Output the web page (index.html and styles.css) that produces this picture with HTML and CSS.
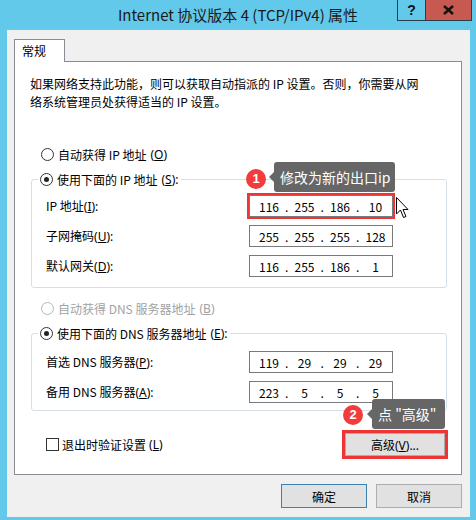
FILE: index.html
```html
<!DOCTYPE html>
<html lang="zh-CN">
<head>
<meta charset="utf-8">
<title>Internet 协议版本 4 (TCP/IPv4) 属性</title>
<link rel="stylesheet" href="styles.css">
</head>
<body>
<div class="window">
  <div class="titlebar">
    <div class="tb-spacer"></div>
    <div class="title">Internet 协议版本 4 (TCP/IPv4) 属性</div>
    <div class="tb-buttons">
      <div class="tb-btn help">?</div>
      <div class="tb-btn close">
        <svg width="11" height="10" viewBox="0 0 11 10"><path d="M1 1 L10 9 M10 1 L1 9" stroke="#111" stroke-width="2.4" fill="none"/></svg>
      </div>
    </div>
  </div>
  <div class="client">
    <div class="tabs"><div class="tab">常规</div></div>
    <div class="panel">
      <p class="intro">如果网络支持此功能，则可以获取自动指派的 IP 设置。否则，你需要从网<br>络系统管理员处获得适当的 IP 设置。</p>

      <div class="radio-row first"><span class="radio"></span>自动获得 IP 地址<span class="mn">(<u>O</u>)</span></div>
      <fieldset class="group ip-group">
        <legend class="radio-row"><span class="radio on"></span>使用下面的 IP 地址<span class="mn">(<u>S</u>):</span></legend>
        <div class="rows">
          <div class="field-row"><span class="label">IP 地址<span class="mn">(<u>I</u>):</span></span>
            <div class="ipbox hl"><span class="oct">116</span><span class="dot">.</span><span class="oct">255</span><span class="dot">.</span><span class="oct">186</span><span class="dot">.</span><span class="oct">10</span></div>
          </div>
          <div class="field-row"><span class="label">子网掩码<span class="mn">(<u>U</u>):</span></span>
            <div class="ipbox"><span class="oct">255</span><span class="dot">.</span><span class="oct">255</span><span class="dot">.</span><span class="oct">255</span><span class="dot">.</span><span class="oct">128</span></div>
          </div>
          <div class="field-row"><span class="label">默认网关<span class="mn">(<u>D</u>):</span></span>
            <div class="ipbox"><span class="oct">116</span><span class="dot">.</span><span class="oct">255</span><span class="dot">.</span><span class="oct">186</span><span class="dot">.</span><span class="oct">1</span></div>
          </div>
        </div>
      </fieldset>

      <div class="radio-row dns-auto disabled"><span class="radio"></span>自动获得 DNS 服务器地址<span class="mn">(<u>B</u>)</span></div>
      <fieldset class="group dns-group">
        <legend class="radio-row"><span class="radio on"></span>使用下面的 DNS 服务器地址<span class="mn">(<u>E</u>):</span></legend>
        <div class="rows">
          <div class="field-row"><span class="label">首选 DNS 服务器<span class="mn">(<u>P</u>):</span></span>
            <div class="ipbox"><span class="oct">119</span><span class="dot">.</span><span class="oct">29</span><span class="dot">.</span><span class="oct">29</span><span class="dot">.</span><span class="oct">29</span></div>
          </div>
          <div class="field-row"><span class="label">备用 DNS 服务器<span class="mn">(<u>A</u>):</span></span>
            <div class="ipbox"><span class="oct">223</span><span class="dot">.</span><span class="oct">5</span><span class="dot">.</span><span class="oct">5</span><span class="dot">.</span><span class="oct">5</span></div>
          </div>
        </div>
      </fieldset>

      <div class="bottom-row">
        <div class="check-row"><span class="checkbox"></span>退出时验证设置<span class="mn">(<u>L</u>)</span></div>
        <button class="btn adv">高级<span class="mn">(<u>V</u>)...</span></button>
      </div>
    </div>
    <div class="dialog-buttons">
      <button class="btn default">确定</button>
      <button class="btn">取消</button>
    </div>
  </div>

  <div class="badge b1">1</div>
  <div class="tip t1">修改为新的出口ip</div>
  <div class="badge b2">2</div>
  <div class="tip t2">点 "高级"</div>
  <svg class="cursor" width="13" height="22" viewBox="0 0 13 22">
    <path d="M0.5 0.5 L0.5 17 L4.5 13 L7.5 20.5 L10 19.5 L7 12.5 L12 12.5 Z" fill="#fff" stroke="#000" stroke-width="1" stroke-linejoin="miter"/>
  </svg>
</div>
</body>
</html>
```

FILE: styles.css
```css
* { box-sizing: border-box; }
html, body { margin: 0; padding: 0; }
body {
  font-family: "Noto Sans CJK SC", "Microsoft YaHei", sans-serif;
  font-size: 12px;
  color: #000;
  background: #fff;
  text-autospace: no-autospace;
}
.mn {
  font-family: "Noto Sans", "Noto Sans CJK SC", sans-serif;
}
.window {
  position: relative;
  width: 476px;
  height: 520px;
  background: #62c9ea;
  padding: 0 6px 3px 7px;
}
.titlebar {
  display: flex;
  height: 30px;
  margin: 0 -6px 0 -7px;
  padding: 0 4px;
}
.tb-spacer { width: 75px; flex: none; }
.title {
  flex: 1;
  text-align: center;
  font-size: 15px;
  line-height: 30px;
  color: #1a1a1a;
  white-space: nowrap;
}
.tb-buttons {
  display: flex;
  width: 75px;
  height: 21px;
  flex: none;
  border: 1px solid #2b3d49;
  border-top: none;
}
.tb-btn {
  display: flex;
  align-items: center;
  justify-content: center;
  height: 100%;
}
.help {
  width: 28px;
  border-right: 1px solid #2b3d49;
  font-weight: bold;
  font-size: 14px;
  font-family: "Liberation Sans", sans-serif;
  color: #111;
}
.close {
  flex: 1;
  background: #c75a50;
}
.client {
  height: 487px;
  background: #f0f0f0;
  padding: 9px 8px 9px 7px;
  display: flex;
  flex-direction: column;
}
.tabs { display: flex; }
.tab {
  position: relative;
  z-index: 1;
  width: 51px;
  height: 23px;
  margin-bottom: -1px;
  background: #fff;
  border: 1px solid #898c95;
  border-bottom: none;
  padding-left: 7px;
  line-height: 21px;
}
.panel {
  background: #fff;
  border: 1px solid #898c95;
  padding: 13px 14px 18px 16px;
}
.intro {
  margin: 0;
  line-height: 18px;
  margin-left: -1px;
}
.radio-row {
  display: flex;
  align-items: center;
  gap: 4px;
  height: 18px;
  white-space: nowrap;
}
.radio-row.first { margin: 34px 0 0 10px; }
.radio-row.dns-auto { margin: 11px 0 0 10px; }
.radio-row.disabled { color: #a2a2a2; }
.radio {
  width: 13px;
  height: 13px;
  border: 1px solid #333;
  border-radius: 50%;
  background: #fff;
  flex: none;
  display: flex;
  align-items: center;
  justify-content: center;
}
.disabled .radio { border-color: #b8b8b8; }
.radio.on::after {
  content: "";
  width: 5px;
  height: 5px;
  border-radius: 50%;
  background: #222;
}
.group {
  margin: 7px 0 0 0;
  border: 1px solid #d5dfe5;
  border-radius: 3px;
  min-width: 0;
  padding: 7px 14px 10px 14px;
}
.dns-group { padding-top: 9px; padding-bottom: 7px; }
.group legend {
  padding: 0 2px;
  margin-left: -8px;
}
.rows {
  display: grid;
  row-gap: 8px;
}
.field-row {
  display: grid;
  grid-template-columns: 203px 144px;
  align-items: center;
  height: 22px;
}
.ipbox {
  height: 22px;
  border: 1px solid #7a7a7a;
  display: flex;
  align-items: center;
  padding-left: 6px;
  background: #fff;
}
.ipbox.hl { outline: 2px solid #ee3535; }
.oct { width: 26px; text-align: center; }
.dot { width: 9.5px; text-align: center; }
.bottom-row {
  display: flex;
  justify-content: space-between;
  align-items: center;
  margin-top: 22px;
  padding: 0 2px 0 15px;
}
.check-row {
  display: flex;
  align-items: center;
  gap: 3px;
}
.checkbox {
  width: 13px;
  height: 13px;
  border: 1px solid #333;
  background: #fff;
}
.btn {
  font-family: inherit;
  font-size: 12px;
  color: #000;
  background: #e1e1e1;
  border: 1px solid #adadad;
  padding: 0;
  margin: 0;
}
.btn.adv {
  width: 100px;
  height: 23px;
  outline: 3px solid #ee3535;
}
.dialog-buttons {
  display: flex;
  justify-content: flex-end;
  gap: 9px;
  margin-top: 9px;
}
.dialog-buttons .btn {
  width: 86px;
  height: 24px;
}
.btn.default { border-color: #3c7fb1; }

.badge {
  position: absolute;
  width: 20px;
  height: 20px;
  border-radius: 50%;
  background: #f23b3b;
  color: #fff;
  font-weight: bold;
  font-family: "Liberation Sans", sans-serif;
  font-size: 13px;
  line-height: 20px;
  text-align: center;
}
.b1 { left: 246px; top: 169px; }
.b2 { left: 343px; top: 405px; }
.tip {
  position: absolute;
  height: 30px;
  background: #666;
  color: #fff;
  font-size: 14px;
  line-height: 30px;
  border-radius: 3px;
  padding-left: 6px;
  white-space: nowrap;
}
.tip::before {
  content: "";
  position: absolute;
  left: -5px;
  top: 10px;
  border-style: solid;
  border-width: 5px 5px 5px 0;
  border-color: transparent #666 transparent transparent;
}
.t1 { left: 274px; top: 162px; width: 121px; }
.t2 { left: 372px; top: 399px; width: 73px; }
.cursor {
  position: absolute;
  left: 396px;
  top: 197px;
}
```
